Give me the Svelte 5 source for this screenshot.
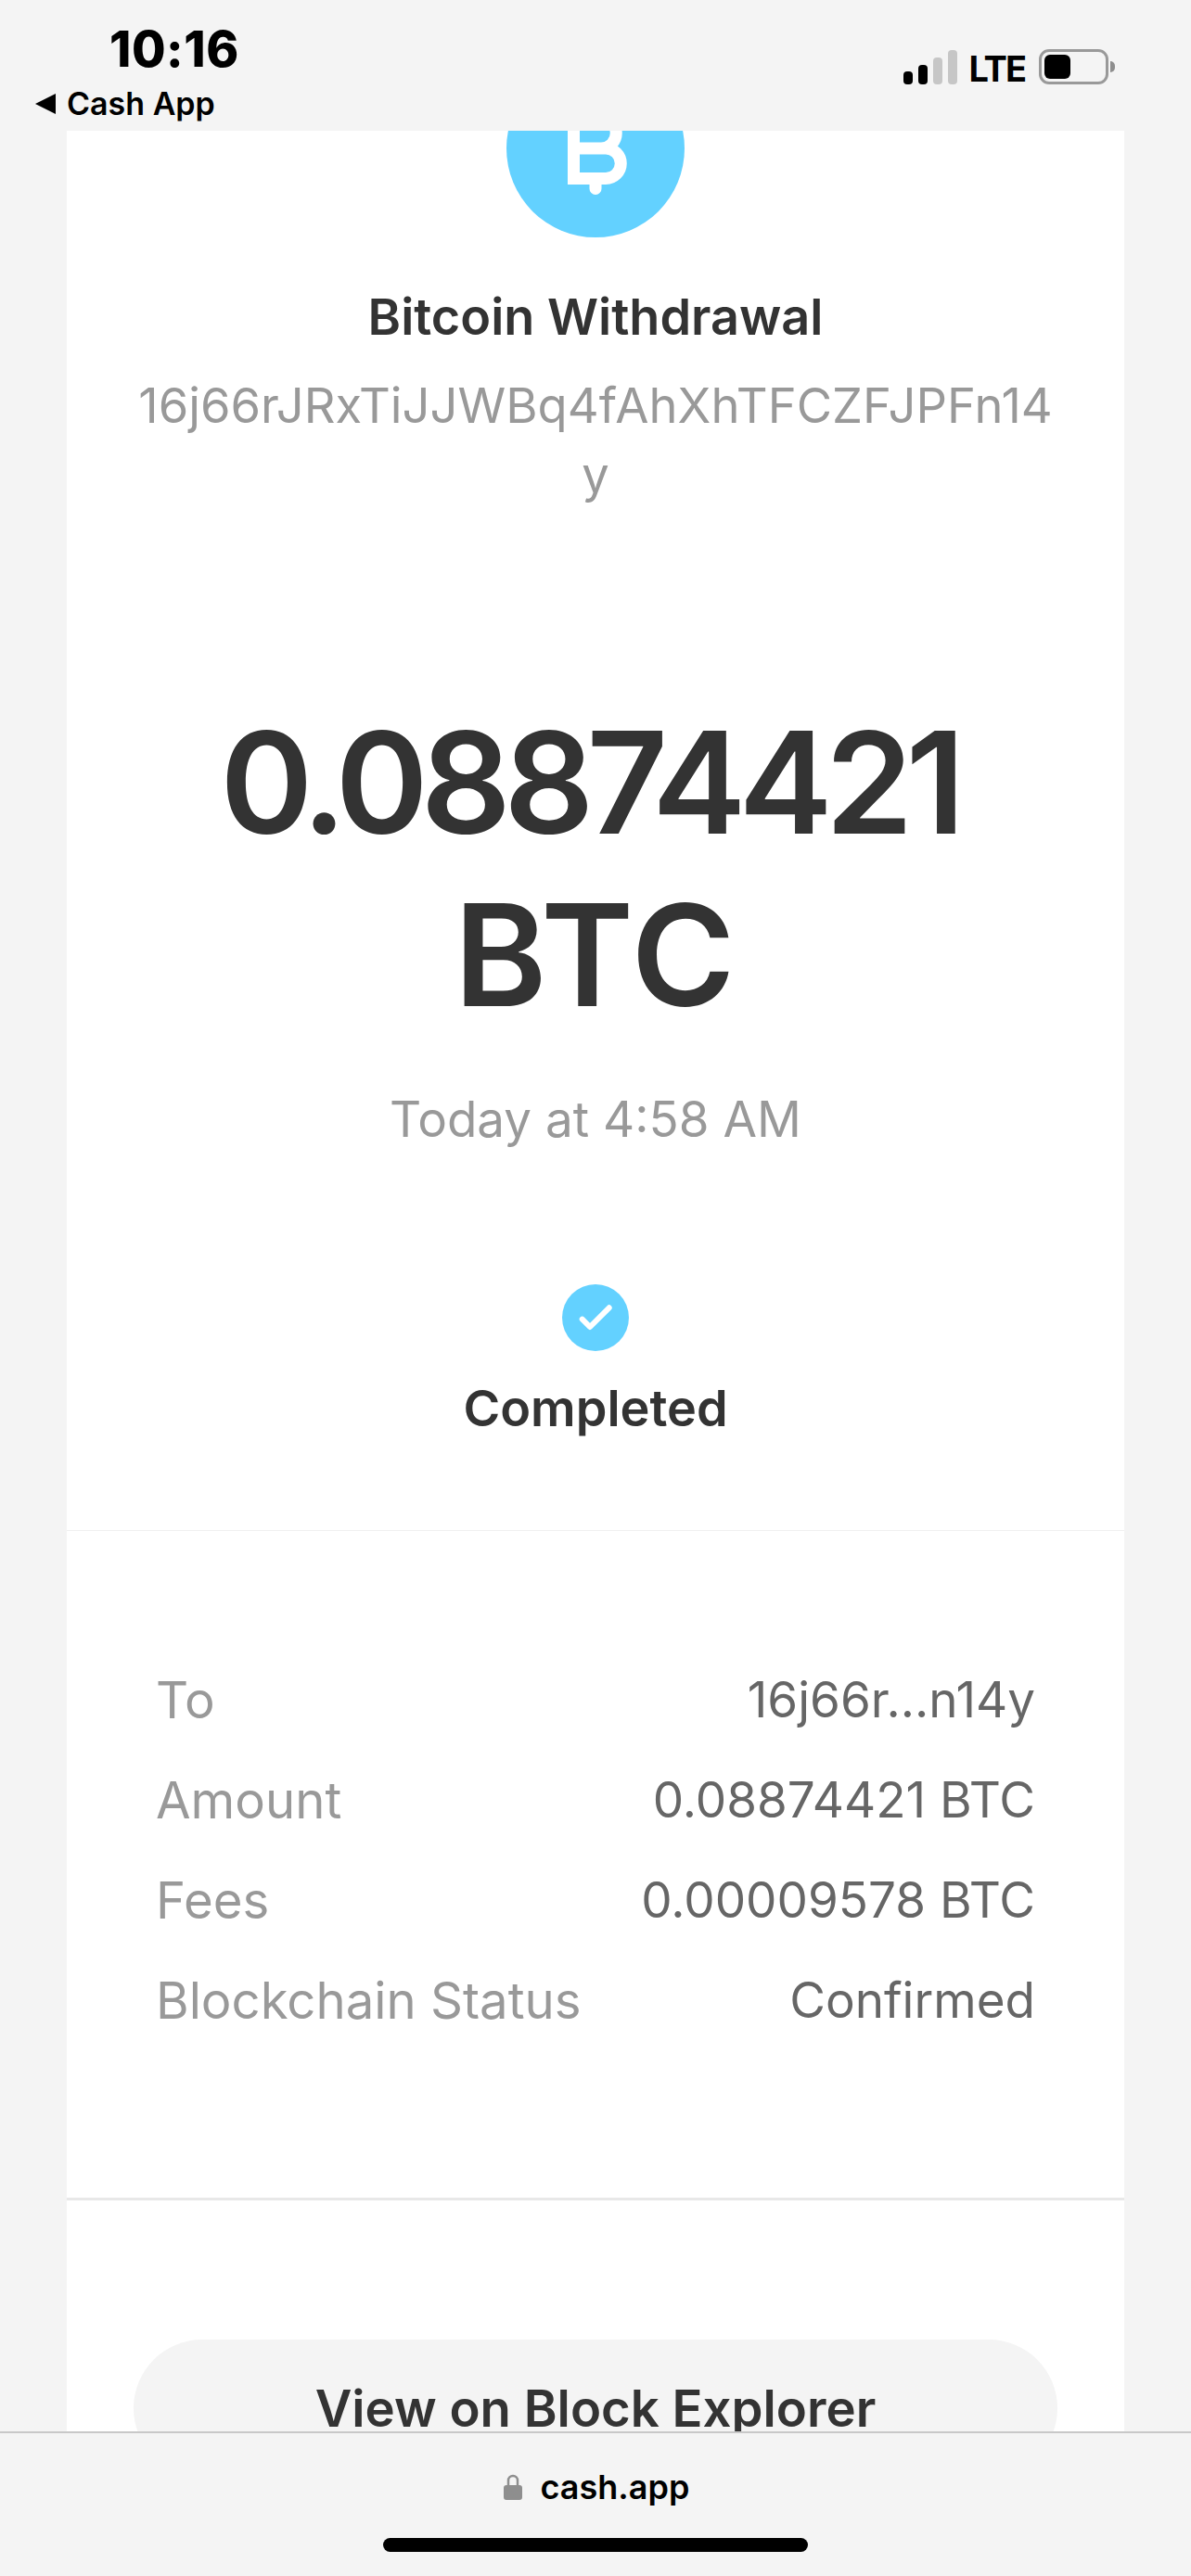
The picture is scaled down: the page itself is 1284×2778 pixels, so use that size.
<script>
  const rows = [
    { label: "To", value: "16j66r...n14y" },
    { label: "Amount", value: "0.08874421 BTC" },
    { label: "Fees", value: "0.00009578 BTC" },
    { label: "Blockchain Status", value: "Confirmed" }
  ];
  const bars = [14, 21, 29, 37];
</script>

<div class="screen">
  <header class="status">
    <div class="status-left">
      <span class="time">10:16</span>
      <span class="back"><i class="back-arrow"></i>Cash App</span>
    </div>
    <div class="status-right">
      <div class="signal">
        {#each bars as h, i}
          <span class="bar" class:off={i > 1} style="height: {h}px"></span>
        {/each}
      </div>
      <span class="lte">LTE</span>
      <div class="battery"><span class="level"></span></div>
      <span class="nub"></span>
    </div>
  </header>

  <main class="content">
    <div class="card">
      <section class="summary">
        <svg class="coin" width="192" height="192" viewBox="0 0 192 192">
          <circle cx="96" cy="96" r="96" fill="#63d1ff" />
          <path
            d="M72.5 50V128.5H107A16.25 16.25 0 0 0 107 96H72.5M72.5 96H102A16.25 16.25 0 0 0 102 63.5H72.5M96 128.5V139.5M96 52V63.5"
            fill="none"
            stroke="#fff"
            stroke-width="13"
            stroke-linecap="round"
          />
        </svg>
        <h1>Bitcoin Withdrawal</h1>
        <p class="address">16j66rJRxTiJJWBq4fAhXhTFCZFJPFn14y</p>
        <p class="amount"><span class="num">0.08874421</span> <span class="unit">BTC</span></p>
        <p class="date">Today at 4:58 AM</p>
        <svg class="check" width="72" height="72" viewBox="0 0 72 72">
          <circle cx="36" cy="36" r="36" fill="#63d1ff" />
          <path d="M21.7 37.7L30 46L50.7 25.3" fill="none" stroke="#fff" stroke-width="6" stroke-linecap="round" stroke-linejoin="round" />
        </svg>
        <p class="state">Completed</p>
      </section>

      <section class="details">
        {#each rows as row}
          <div class="row">
            <span class="label">{row.label}</span>
            <span class="value">{row.value}</span>
          </div>
        {/each}
      </section>

      <section class="actions">
        <div class="button">View on Block Explorer</div>
      </section>
    </div>
  </main>

  <footer class="browser">
    <div class="url">
      <svg width="20" height="28" viewBox="0 0 20 28">
        <path d="M5 13V7a5 5 0 0 1 10 0v6" fill="none" stroke="#8e8e8e" stroke-width="2.5" />
        <rect x="0" y="12" width="20" height="16" rx="3" fill="#8e8e8e" />
      </svg>
      <span>cash.app</span>
    </div>
    <div class="home"></div>
  </footer>
</div>

<style>
  :global(body) {
    background: #f4f4f4;
  }

  .screen {
    width: 1284px;
    height: 2778px;
    display: flex;
    flex-direction: column;
    overflow: hidden;
    background: #f4f4f4;
    font-family: "Inter", "Liberation Sans", sans-serif;
  }

  .status {
    height: 141px;
    flex: none;
    display: flex;
    justify-content: space-between;
    color: #000;
  }

  .status-left {
    display: flex;
    flex-direction: column;
    padding: 24px 0 0 38px;
  }

  .time {
    margin-left: 80px;
    font-size: 53px;
    line-height: 58px;
    font-weight: 800;
    letter-spacing: 0.5px;
  }

  .back {
    display: flex;
    align-items: center;
    gap: 12px;
    margin-top: 8px;
    font-size: 34px;
    line-height: 44px;
    font-weight: 600;
  }

  .back-arrow {
    width: 0;
    height: 0;
    border-top: 11px solid transparent;
    border-bottom: 11px solid transparent;
    border-right: 22px solid #000;
  }

  .status-right {
    display: flex;
    align-items: flex-end;
    height: 91px;
    padding-right: 82px;
  }

  .signal {
    display: flex;
    align-items: flex-end;
    gap: 6px;
  }

  .bar {
    width: 10px;
    background: #000;
    border-radius: 4px;
  }

  .bar.off {
    background: #c6c6c6;
  }

  .lte {
    margin: 0 15px 0 13px;
    font-size: 38px;
    line-height: 30px;
    height: 32px;
    font-weight: 700;
    letter-spacing: -2px;
  }

  .battery {
    box-sizing: border-box;
    width: 75px;
    height: 38px;
    padding: 3px;
    border: 3px solid #999;
    border-radius: 11px;
  }

  .level {
    display: block;
    width: 28px;
    height: 26px;
    background: #000;
    border-radius: 6px;
  }

  .nub {
    width: 5px;
    height: 12px;
    margin: 0 0 13px 2px;
    background: #8e8e8e;
    border-radius: 0 6px 6px 0;
  }

  .content {
    flex: 1;
    min-height: 0;
    overflow: hidden;
    padding: 0 72px;
  }

  .card {
    background: #fff;
    overflow: hidden;
    color: #333;
  }

  .summary {
    display: flex;
    flex-direction: column;
    align-items: center;
    text-align: center;
    height: 1510px;
    box-sizing: border-box;
    border-bottom: 1px solid #f0f0f0;
  }

  .coin {
    flex: none;
    margin-top: -77px;
  }

  h1 {
    margin: 48px 0 0;
    font-size: 54px;
    line-height: 76px;
    font-weight: 600;
  }

  .address {
    width: 1000px;
    margin: 20px 0 0;
    font-size: 52.5px;
    line-height: 75px;
    color: #999;
    overflow-wrap: anywhere;
  }

  .amount {
    width: 900px;
    margin: 201px 0 0;
    font-size: 152px;
    line-height: 186px;
    font-weight: 600;
  }

  .num {
    letter-spacing: -8px;
    padding-right: 14px;
  }

  .unit {
    letter-spacing: 2px;
  }

  .date {
    margin: 46px 0 0;
    font-size: 53px;
    line-height: 76px;
    color: #999;
  }

  .check {
    flex: none;
    margin-top: 140px;
  }

  .state {
    margin: 24px 0 0;
    font-size: 54px;
    line-height: 76px;
    font-weight: 600;
  }

  .details {
    height: 722px;
    box-sizing: border-box;
    padding: 128px 96px 0;
    border-bottom: 3px solid #e8e8e8;
  }

  .row {
    display: flex;
    justify-content: space-between;
    height: 108px;
    font-size: 53px;
    line-height: 108px;
  }

  .label {
    color: #999;
    font-size: 54.5px;
  }

  .value {
    color: #666;
  }

  .actions {
    padding: 150px 72px 0;
  }

  .button {
    height: 148px;
    border-radius: 74px;
    background: #f4f4f4;
    font-size: 54.5px;
    line-height: 148px;
    font-weight: 600;
    text-align: center;
  }

  .browser {
    height: 156px;
    flex: none;
    box-sizing: border-box;
    border-top: 2px solid #c8c8c8;
    background: #f4f4f4;
    display: flex;
    flex-direction: column;
    align-items: center;
  }

  .url {
    display: flex;
    align-items: center;
    gap: 20px;
    margin: 40px 0 0 2px;
    font-size: 36px;
    line-height: 36px;
    font-weight: 600;
    color: #000;
  }

  .home {
    width: 458px;
    height: 15px;
    margin-top: 37px;
    background: #000;
    border-radius: 8px;
  }
</style>
